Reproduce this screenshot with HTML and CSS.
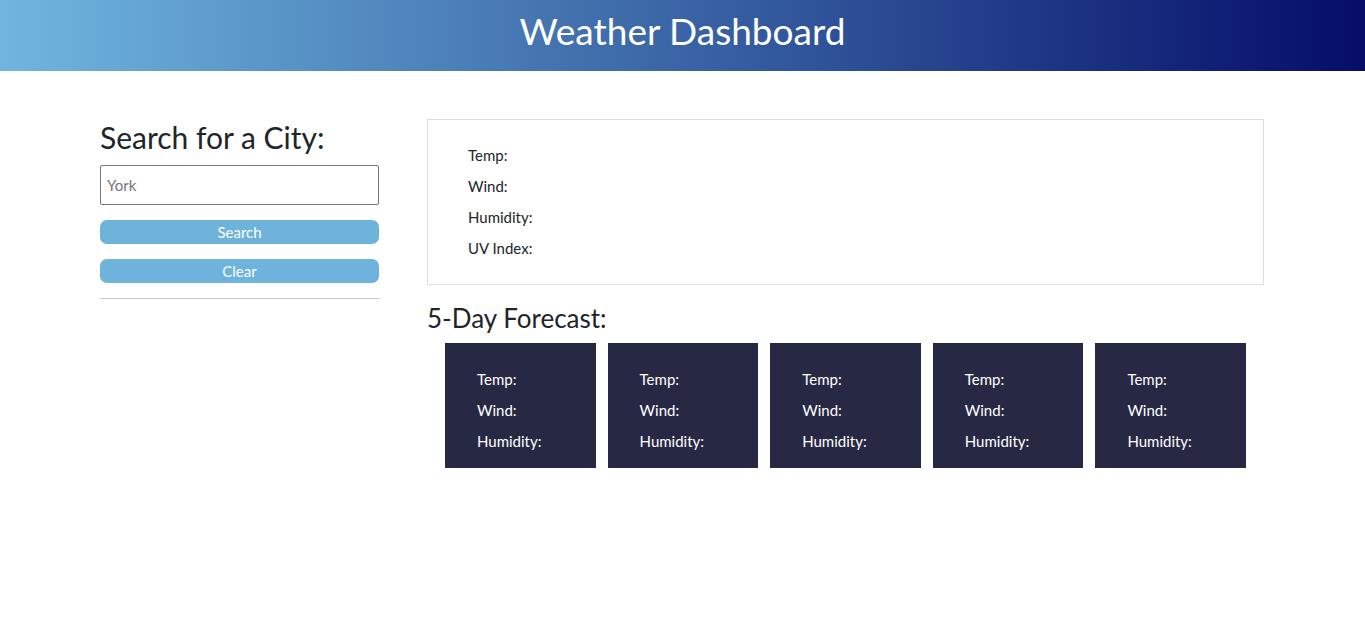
FILE: index.html
```html
<!DOCTYPE html>
<html lang="en">
<head>
<meta charset="utf-8">
<title>Weather Dashboard</title>
<link rel="stylesheet" href="styles.css">
</head>
<body>
<header class="topbar">
  <h1 class="title">Weather Dashboard</h1>
</header>
<main class="layout">
  <aside class="sidebar">
    <h2 class="side-title">Search for a City:</h2>
    <input class="city-input" type="text" placeholder="York">
    <button class="btn">Search</button>
    <button class="btn">Clear</button>
    <hr class="divider">
  </aside>
  <section class="content">
    <div class="current">
      <p class="stat">Temp:</p>
      <p class="stat">Wind:</p>
      <p class="stat">Humidity:</p>
      <p class="stat">UV Index:</p>
    </div>
    <h3 class="forecast-title">5-Day Forecast:</h3>
    <div class="cards">
      <div class="card"><p class="stat">Temp:</p><p class="stat">Wind:</p><p class="stat">Humidity:</p></div>
      <div class="card"><p class="stat">Temp:</p><p class="stat">Wind:</p><p class="stat">Humidity:</p></div>
      <div class="card"><p class="stat">Temp:</p><p class="stat">Wind:</p><p class="stat">Humidity:</p></div>
      <div class="card"><p class="stat">Temp:</p><p class="stat">Wind:</p><p class="stat">Humidity:</p></div>
      <div class="card"><p class="stat">Temp:</p><p class="stat">Wind:</p><p class="stat">Humidity:</p></div>
    </div>
  </section>
</main>
</body>
</html>
```

FILE: styles.css
```css
* { box-sizing: border-box; }
body {
  margin: 0;
  font-family: "Lato", "Open Sans", sans-serif;
  color: #212529;
  background: #fff;
}
.topbar {
  height: 71px;
  background: linear-gradient(to right, #6fb6df, #3a64a5 50%, #050d68);
  display: flex;
  align-items: center;
  justify-content: center;
}
.title {
  margin: 0;
  color: #fff;
  font-weight: 400;
  font-size: 37px;
  line-height: 1;
  padding-bottom: 11px;
}
.layout {
  display: flex;
  gap: 48px;
  padding: 48px 101px 0 100px;
}
.sidebar {
  width: 279px;
  flex: none;
  display: flex;
  flex-direction: column;
}
.side-title {
  margin: 0 0 10px;
  font-size: 30px;
  font-weight: 400;
  line-height: 36px;
}
.city-input {
  height: 40px;
  border: 1px solid #767676;
  border-radius: 2px;
  padding: 0 6px;
  font-family: inherit;
  font-size: 15px;
  margin-bottom: 15px;
}
.city-input::placeholder { color: #757575; }
.btn {
  height: 24px;
  border: none;
  border-radius: 7px;
  background: #6db3dc;
  color: #fff;
  font-family: inherit;
  font-size: 15px;
  padding: 0;
  margin-bottom: 15px;
}
.divider {
  margin: 0;
  border: none;
  border-top: 1px solid #c8c8c8;
}
.content {
  flex: 1;
}
.current {
  border: 1px solid #dedede;
  padding: 20px 40px 28px;
  height: 166px;
}
.stat {
  margin: 0;
  font-size: 15px;
  line-height: 31px;
}
.forecast-title {
  margin: 18px 0 10px;
  font-size: 26px;
  font-weight: 400;
  line-height: 30px;
}
.cards {
  display: flex;
  gap: 12px;
  padding: 0 18px;
}
.card {
  flex: 1;
  height: 125px;
  background: #272843;
  color: #fff;
  padding: 21px 32px 19px;
}
```
